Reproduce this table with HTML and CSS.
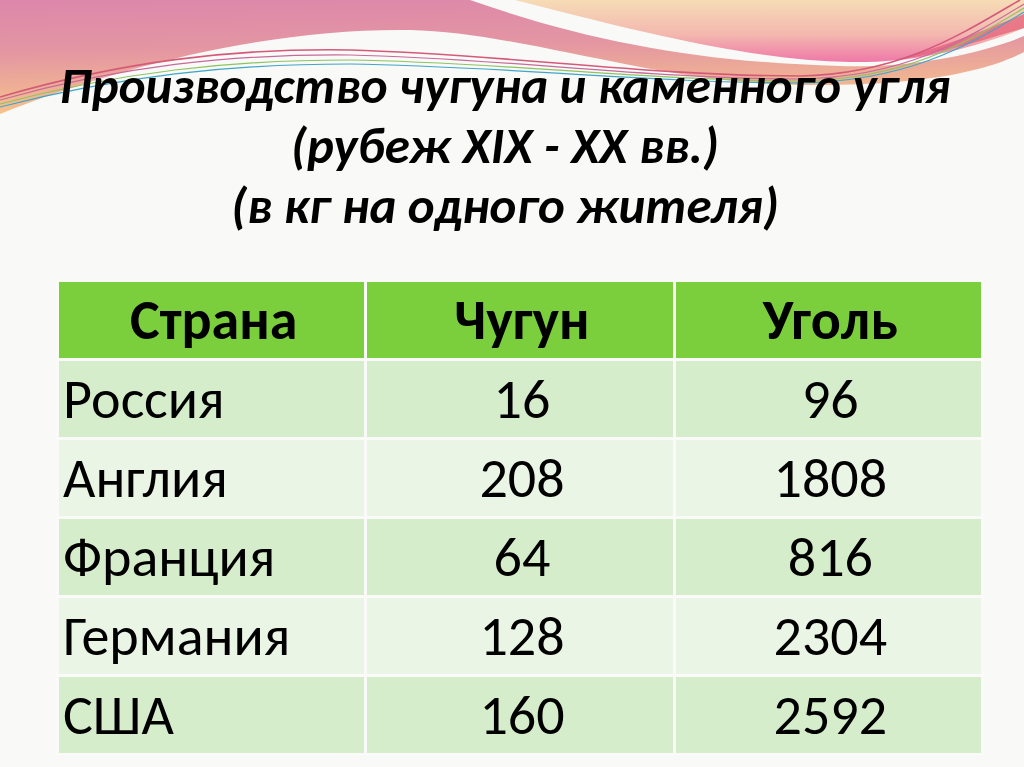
FILE: index.html
```html
<!DOCTYPE html>
<html lang="ru">
<head>
<meta charset="utf-8">
<title>Производство чугуна и каменного угля</title>
<link rel="stylesheet" href="styles.css">
</head>
<body>
<div class="slide">
  <svg class="decor" width="1024" height="130" viewBox="0 0 1024 130" aria-hidden="true">
    <defs>
      <linearGradient id="gA" x1="0" y1="0" x2="0.15" y2="1">
        <stop offset="0" stop-color="#dc87ab"/>
        <stop offset="0.45" stop-color="#e496a2"/>
        <stop offset="1" stop-color="#f6c48a"/>
      </linearGradient>
      <linearGradient id="gB" x1="0" y1="0" x2="0" y2="1">
        <stop offset="0" stop-color="#f6dcb6"/>
        <stop offset="0.55" stop-color="#f3b8ae"/>
        <stop offset="1" stop-color="#ef78a8"/>
      </linearGradient>
    </defs>
    <path d="M0,0 H470 C590,42 700,62 840,66 C920,68 985,52 1024,36 V52 C985,72 920,86 800,85 C660,84 520,32 410,30 C280,28 130,62 0,114 Z" fill="url(#gA)"/>
    <path d="M515,0 H1024 V28 C965,52 905,63 850,62 C750,60 640,32 515,0 Z" fill="url(#gB)"/>
    <path d="M1024,14 C985,30 940,48 895,60 C930,56 985,40 1024,28 Z" fill="#e5607a" opacity="0.75"/>
    <path d="M0,97 C120,62 230,48 350,50 C500,54 650,76 800,76 C900,74 960,35 1020,0" fill="none" stroke="#d45a7a" stroke-width="1.6"/>
    <path d="M0,100 C120,66 230,54 350,55 C500,58 650,79 800,79 C905,77 965,40 1024,4" fill="none" stroke="#c76a9a" stroke-width="1.2"/>
    <path d="M0,104 C120,72 230,60 350,60 C500,62 650,81 800,81 C905,79 965,44 1024,8" fill="none" stroke="#8cc460" stroke-width="1.2"/>
    <path d="M0,107 C120,76 230,64 350,64 C500,66 650,83 800,83 C905,81 965,48 1024,12" fill="none" stroke="#3fa6c8" stroke-width="1.2"/>
  </svg>

  <h1 class="title">
    <span class="line">Производство чугуна и каменного угля</span>
    <span class="line">(рубеж XIX - XX вв.)</span>
    <span class="line">(в кг на одного жителя)</span>
  </h1>

  <table class="data">
    <thead>
      <tr><th>Страна</th><th>Чугун</th><th>Уголь</th></tr>
    </thead>
    <tbody>
      <tr class="odd"><td>Россия</td><td>16</td><td>96</td></tr>
      <tr class="even"><td>Англия</td><td>208</td><td>1808</td></tr>
      <tr class="odd"><td>Франция</td><td>64</td><td>816</td></tr>
      <tr class="even"><td>Германия</td><td>128</td><td>2304</td></tr>
      <tr class="odd"><td>США</td><td>160</td><td>2592</td></tr>
    </tbody>
  </table>
</div>
</body>
</html>
```

FILE: styles.css
```css
html, body {
  margin: 0;
  padding: 0;
}
body {
  background: #f9f9f8;
  font-family: Carlito, Calibri, "Liberation Sans Narrow", "Open Sans", sans-serif;
  color: #000;
}
.slide {
  position: relative;
  width: 1024px;
  height: 767px;
  overflow: hidden;
}
.decor {
  position: absolute;
  left: 0;
  top: 0;
}
.title {
  position: relative;
  margin: 0;
  padding: 56px 14px 0 0;
  font-size: 51px;
  font-weight: bold;
  font-style: italic;
  line-height: 60px;
  text-align: center;
}
.title .line {
  display: block;
}
.data {
  margin: 43px 0 0 56px;
  border-collapse: collapse;
  width: 928px;
  table-layout: fixed;
}
.data th,
.data td {
  border: 3px solid #fafbf8;
  height: 76px;
  padding: 0 0 0 4px;
  font-size: 56px;
  line-height: 1;
  text-align: center;
  vertical-align: middle;
}
.data th {
  background: #7ccf3c;
  font-weight: bold;
  font-size: 56px;
}
.data td:first-child {
  text-align: left;
}
.data .odd td {
  background: #d6edcc;
}
.data .even td {
  background: #eaf5e5;
}
```
